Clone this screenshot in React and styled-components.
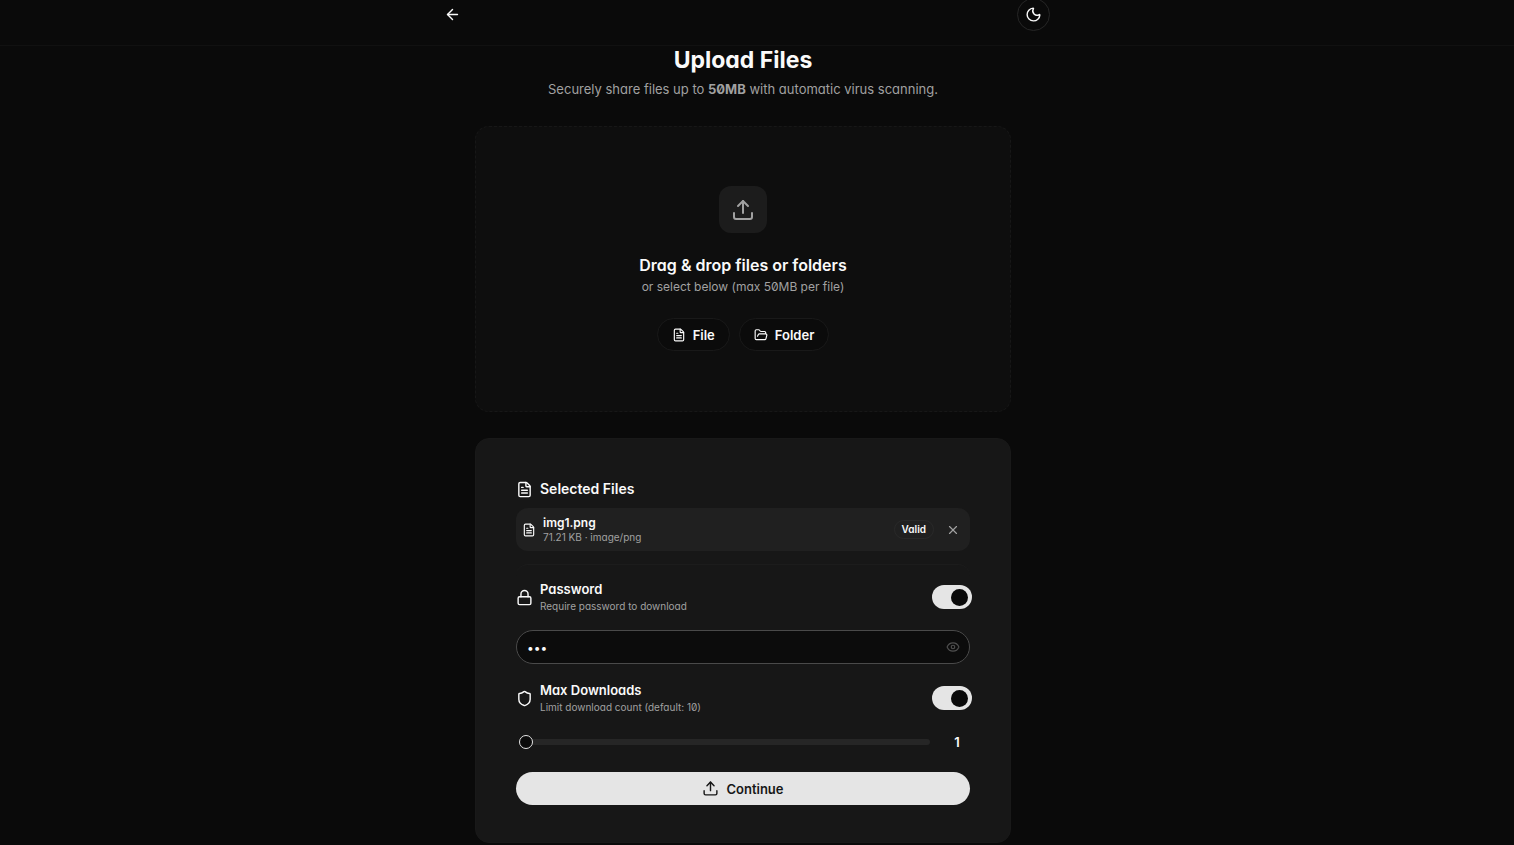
import styled, { createGlobalStyle } from "styled-components";
import { useState } from "react";
import { ArrowLeft, Eye, FileText, FolderOpen, Lock, Moon, Shield, Upload, X } from "lucide-react";

const GlobalStyle = createGlobalStyle`
  * {
    box-sizing: border-box;
  }

  body {
    margin: 0;
    background: #0a0a0a;
    color: #fafafa;
    font-family: Inter, "Liberation Sans", sans-serif;
    font-feature-settings: "cv11", "zero";
    font-size: 13px;
  }

  button, input {
    font: inherit;
    font-feature-settings: inherit;
    color: inherit;
  }
`;

const Page = styled.div`
  min-height: 100vh;
`;

const Header = styled.header`
  padding: 0 28px 17px 0;
  border-bottom: 1px solid #111111;
`;

const HeaderRow = styled.div`
  display: flex;
  justify-content: space-between;
  align-items: center;
  max-width: 614px;
  height: 28px;
  margin: 0 auto;
`;

const IconButton = styled.button`
  display: flex;
  flex-shrink: 0;
  justify-content: center;
  align-items: center;
  width: ${(props) => props.$size}px;
  height: ${(props) => props.$size}px;
  padding: 0;
  border: 1px solid ${(props) => props.$border || "transparent"};
  border-radius: 50%;
  background: transparent;
  color: ${(props) => props.$color || "#fafafa"};
  cursor: pointer;
`;

const Main = styled.main`
  padding-right: 28px;
`;

const Content = styled.div`
  display: flex;
  flex-direction: column;
  max-width: 536px;
  margin: 0 auto;
`;

const Intro = styled.div`
  padding-bottom: 27px;
  text-align: center;
`;

const Title = styled.h1`
  margin: 0;
  font-size: 23px;
  font-weight: 700;
  line-height: 28px;
`;

const Subtitle = styled.p`
  margin: 5px 0 0;
  color: #a1a1a1;
  font-size: 13px;
  line-height: 20px;
`;

const DropZone = styled.section`
  display: flex;
  flex-direction: column;
  align-items: center;
  padding: 59px 24px 60px;
  border: 1px dashed #171717;
  border-radius: 14px;
  background: #0e0e0e;
`;

const DropIcon = styled.div`
  display: flex;
  justify-content: center;
  align-items: center;
  width: 48px;
  height: 47px;
  border-radius: 12px;
  background: #1c1c1c;
  color: #a1a1a1;
`;

const DropTitle = styled.h2`
  margin: 20px 0 0;
  font-size: 16px;
  font-weight: 600;
  line-height: 24px;
`;

const DropHint = styled.p`
  margin: 0;
  color: #a1a1a1;
  font-size: 12px;
  line-height: 20px;
`;

const PickerRow = styled.div`
  display: flex;
  gap: 9px;
  margin-top: 21px;
`;

const PickButton = styled.button`
  display: flex;
  align-items: center;
  gap: 7px;
  height: 33px;
  padding: 0 14px;
  border: 1px solid #191919;
  border-radius: 17px;
  background: #0b0b0b;
  font-size: 13px;
  font-weight: 600;
  cursor: pointer;
`;

const Card = styled.section`
  margin: 26px 0 2px;
  padding: 40px 40px 37px;
  border: 1px solid #191919;
  border-radius: 14px;
  background: #171717;
`;

const CardTitle = styled.h2`
  display: flex;
  align-items: center;
  gap: 7px;
  margin: 0;
  font-size: 14px;
  font-weight: 600;
  line-height: 20px;
`;

const FileRow = styled.div`
  display: flex;
  align-items: center;
  gap: 7px;
  height: 43px;
  margin-top: 9px;
  padding: 0 5px 0 6px;
  border-radius: 12px;
  background: #202020;
`;

const Stack = styled.div`
  flex: 1;
  min-width: 0;
`;

const FileName = styled.div`
  font-size: 12px;
  font-weight: 600;
  line-height: 15px;
`;

const SmallText = styled.div`
  color: #a1a1a1;
  font-size: 10px;
  line-height: ${(props) => props.$line || 14}px;
`;

const Badge = styled.span`
  padding: 0 7px;
  border: 1px solid #292929;
  border-radius: 10px;
  font-size: 10px;
  font-weight: 600;
  line-height: 17px;
`;

const Options = styled.div`
  margin-top: 13px;
  padding-top: 15px;
  border-top: 1px solid #1c1c1c;
  border-radius: 12px;
`;

const OptionRow = styled.div`
  display: flex;
  align-items: center;
  gap: 7px;
  height: 34px;
`;

const OptionLabel = styled.label`
  display: block;
  font-size: 13px;
  font-weight: 600;
  line-height: 18px;
`;

const Switch = styled.input`
  appearance: none;
  display: flex;
  align-items: center;
  width: 40px;
  height: 24px;
  margin: 0 -2px 0 0;
  padding: 0 4px;
  border-radius: 12px;
  background: #3a3a3a;
  cursor: pointer;

  &::before {
    content: "";
    width: 17px;
    height: 17px;
    border-radius: 50%;
    background: #0a0a0a;
  }

  &:checked {
    justify-content: flex-end;
    background: #e5e5e5;
  }
`;

const PasswordField = styled.div`
  display: flex;
  align-items: center;
  height: 34px;
  margin: 16px 0 17px;
  padding: 0 6px 0 10px;
  border: 1px solid #4a4a4a;
  border-radius: 17px;
  background: #0c0c0c;
`;

const PasswordInput = styled.input`
  flex: 1;
  min-width: 0;
  padding: 0;
  border: 0;
  outline: 0;
  background: transparent;
  font-size: 12px;
`;

const SliderRow = styled.div`
  display: flex;
  align-items: center;
  height: 20px;
  margin: 17px 0 20px;
  padding-left: 3px;
`;

const Slider = styled.input`
  appearance: none;
  flex: 1;
  height: 6px;
  margin: 0;
  border-radius: 3px;
  background: #262626;
  cursor: pointer;

  &::-webkit-slider-thumb {
    appearance: none;
    width: 14px;
    height: 14px;
    border: 1px solid #e5e5e5;
    border-radius: 50%;
    background: #0a0a0a;
  }
`;

const Count = styled.output`
  width: 40px;
  padding-left: 14px;
  text-align: center;
  font-size: 13px;
  font-weight: 600;
`;

const SubmitButton = styled.button`
  display: flex;
  justify-content: center;
  align-items: center;
  gap: 7px;
  width: 100%;
  height: 33px;
  border: 0;
  border-radius: 17px;
  background: #e5e5e5;
  color: #171717;
  font-size: 13px;
  font-weight: 600;
  cursor: pointer;
`;

function App() {
  const [usePassword, setUsePassword] = useState(true);
  const [password, setPassword] = useState("abc");
  const [showPassword, setShowPassword] = useState(false);
  const [useLimit, setUseLimit] = useState(true);
  const [limit, setLimit] = useState(1);

  return (
    <Page>
      <GlobalStyle />
      <Header>
        <HeaderRow>
          <IconButton $size={33} aria-label="Back">
            <ArrowLeft size={17} />
          </IconButton>
          <IconButton $size={33} $border="#262626" aria-label="Toggle theme">
            <Moon size={17} />
          </IconButton>
        </HeaderRow>
      </Header>
      <Main>
        <Content>
          <Intro>
            <Title>Upload Files</Title>
            <Subtitle>
              Securely share files up to <strong>50MB</strong> with automatic virus scanning.
            </Subtitle>
          </Intro>

          <DropZone>
            <DropIcon>
              <Upload size={24} />
            </DropIcon>
            <DropTitle>Drag &amp; drop files or folders</DropTitle>
            <DropHint>or select below (max 50MB per file)</DropHint>
            <PickerRow>
              <PickButton type="button">
                <FileText size={14} />
                File
              </PickButton>
              <PickButton type="button">
                <FolderOpen size={14} />
                Folder
              </PickButton>
            </PickerRow>
          </DropZone>

          <Card>
            <CardTitle>
              <FileText size={17} />
              Selected Files
            </CardTitle>
            <FileRow>
              <FileText size={14} />
              <Stack>
                <FileName>img1.png</FileName>
                <SmallText>71.21 KB · image/png</SmallText>
              </Stack>
              <Badge>Valid</Badge>
              <IconButton $size={24} $color="#a1a1a1" aria-label="Remove file">
                <X size={14} />
              </IconButton>
            </FileRow>

            <Options>
              <OptionRow>
                <Lock size={17} />
                <Stack>
                  <OptionLabel htmlFor="use-password">Password</OptionLabel>
                  <SmallText $line={16}>Require password to download</SmallText>
                </Stack>
                <Switch
                  id="use-password"
                  type="checkbox"
                  role="switch"
                  checked={usePassword}
                  onChange={(e) => setUsePassword(e.target.checked)}
                />
              </OptionRow>
              <PasswordField>
                <PasswordInput
                  type={showPassword ? "text" : "password"}
                  aria-label="Password"
                  value={password}
                  onChange={(e) => setPassword(e.target.value)}
                />
                <IconButton
                  $size={20}
                  $color="#4f4f4f"
                  aria-label="Show password"
                  onClick={() => setShowPassword(!showPassword)}
                >
                  <Eye size={14} />
                </IconButton>
              </PasswordField>

              <OptionRow>
                <Shield size={17} />
                <Stack>
                  <OptionLabel htmlFor="use-limit">Max Downloads</OptionLabel>
                  <SmallText $line={16}>Limit download count (default: 10)</SmallText>
                </Stack>
                <Switch
                  id="use-limit"
                  type="checkbox"
                  role="switch"
                  checked={useLimit}
                  onChange={(e) => setUseLimit(e.target.checked)}
                />
              </OptionRow>
              <SliderRow>
                <Slider
                  type="range"
                  min="1"
                  max="100"
                  aria-label="Max downloads"
                  value={limit}
                  onChange={(e) => setLimit(e.target.value)}
                />
                <Count>{limit}</Count>
              </SliderRow>
            </Options>

            <SubmitButton type="submit">
              <Upload size={17} />
              Continue
            </SubmitButton>
          </Card>
        </Content>
      </Main>
    </Page>
  );
}

export default App;
